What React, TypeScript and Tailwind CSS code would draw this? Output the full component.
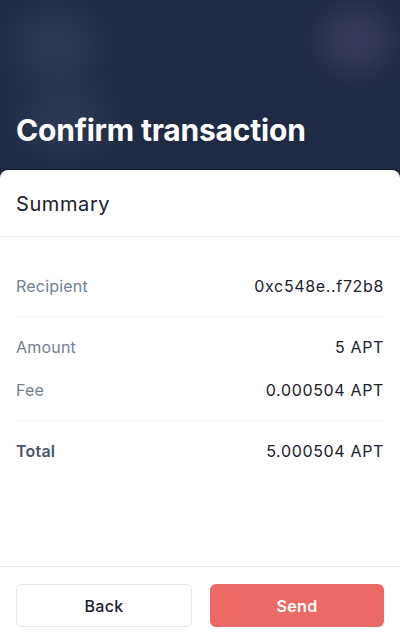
import React from "react";

function Row({ label, value, bold }: { label: string; value: string; bold?: boolean }) {
  return (
    <div className="flex h-6 items-center justify-between">
      <span className={`text-[16px] tracking-[0.2px] ${bold ? "font-semibold text-[#4a5568]" : "text-[#718096]"}`}>{label}</span>
      <span className="text-[16px] tracking-[0.65px] text-[#1a202c]">{value}</span>
    </div>
  );
}

export default function App() {
  return (
    <div
      className="relative flex h-[641px] w-[400px] flex-col overflow-hidden bg-[#1f2a44]"
      style={{ fontFamily: "Inter, 'Noto Sans', sans-serif" }}
    >
      <div className="pointer-events-none absolute left-[10px] top-[10px] h-[70px] w-[90px] rounded-full bg-[#4a5570] opacity-40 blur-[22px]" />
      <div className="pointer-events-none absolute left-[320px] top-[10px] h-[60px] w-[70px] rounded-full bg-[#5a5478] opacity-50 blur-[18px]" />
      <div className="pointer-events-none absolute left-[20px] top-[90px] h-[60px] w-[90px] rounded-full bg-[#4a5570] opacity-40 blur-[22px]" />
      <div className="relative flex h-[170px] shrink-0 items-end px-4 pb-[22px]">
        <h1 className="text-[30px] font-bold leading-9 tracking-[-0.2px] text-white">Confirm transaction</h1>
      </div>
      <div className="relative flex flex-1 flex-col rounded-t-[8px] bg-white shadow-[0_-1px_1px_rgba(0,0,0,0.4)]">
        <div className="flex h-[67px] items-center border-b border-[#e2e8f0] px-4 pt-[2px]">
          <span className="text-[20px] tracking-[0.6px] text-[#1a202c]">Summary</span>
        </div>
        <div className="flex flex-1 flex-col px-4 pt-[37px]">
          <Row label="Recipient" value="0xc548e..f72b8" />
          <div className="my-[18px] h-px bg-[#edf2f7]" />
          <div className="flex flex-col gap-[19px]">
            <Row label="Amount" value="5 APT" />
            <Row label="Fee" value="0.000504 APT" />
          </div>
          <div className="my-[18px] h-px bg-[#edf2f7]" />
          <Row label="Total" value="5.000504 APT" bold />
        </div>
        <div className="flex gap-[18px] border-t border-[#e2e8f0] px-4 pb-[14px] pt-[17px]">
          <button className="h-[43px] flex-1 rounded-[6px] border border-[#e2e8f0] bg-white text-[16px] font-medium tracking-[0.3px] text-[#1a202c]">
            Back
          </button>
          <button className="h-[43px] flex-1 rounded-[6px] bg-[#ec6a66] text-[16px] font-semibold tracking-[0.3px] text-white">
            Send
          </button>
        </div>
      </div>
    </div>
  );
}
